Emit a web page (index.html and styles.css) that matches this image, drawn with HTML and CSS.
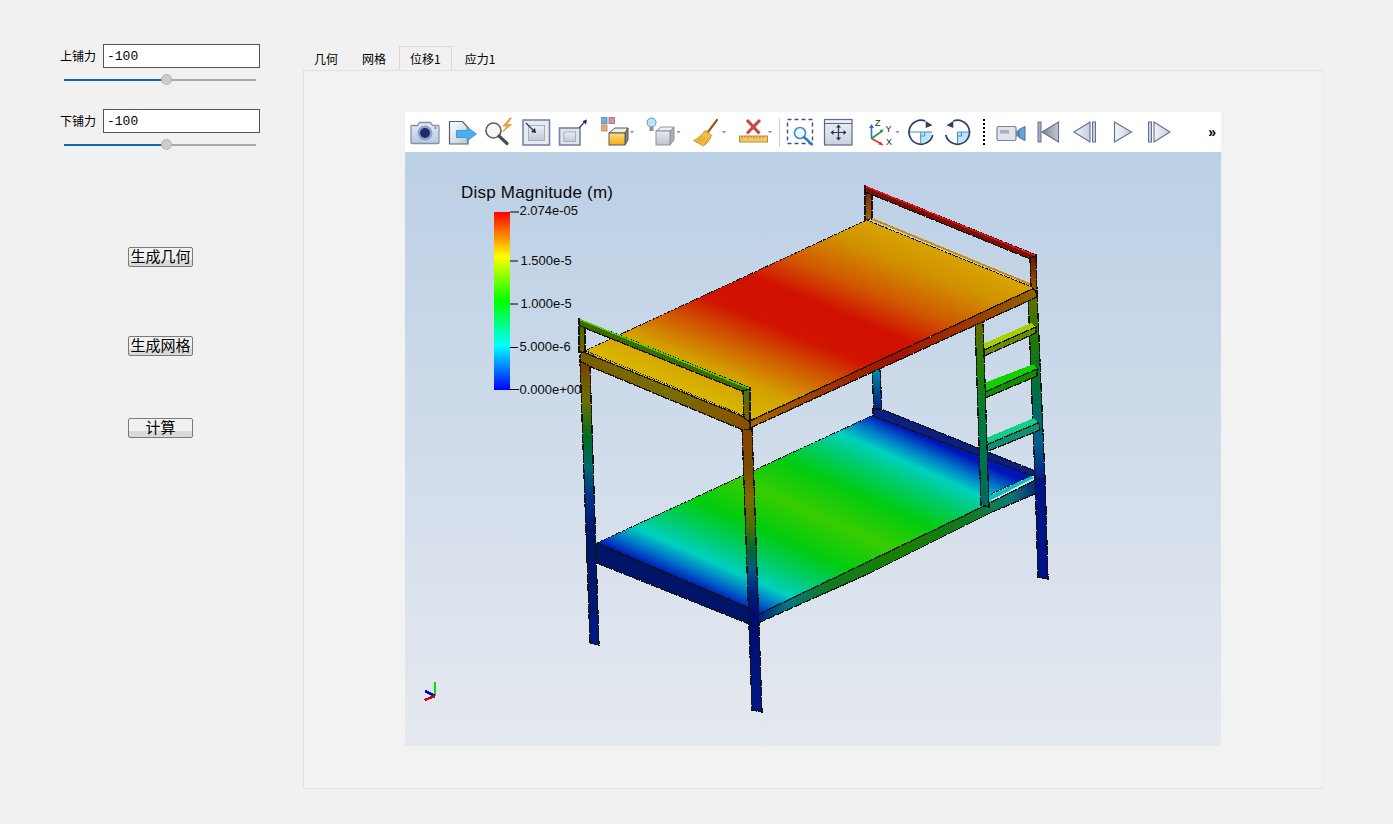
FILE: index.html
```html
<!DOCTYPE html>
<html lang="zh">
<head>
<meta charset="utf-8">
<title>Bed analysis</title>
<link rel="stylesheet" href="styles.css">
</head>
<body>
<div class="app">
  <aside class="side">
    <div class="field"><span class="field-label">上铺力</span><div class="num">-100</div></div>
    <div class="slider"><div class="slider-fill"></div><div class="slider-rest"></div><div class="slider-thumb"></div></div>
    <div class="field field-second"><span class="field-label">下铺力</span><div class="num">-100</div></div>
    <div class="slider"><div class="slider-fill"></div><div class="slider-rest"></div><div class="slider-thumb"></div></div>
    <button class="btn btn-geo">生成几何</button>
    <button class="btn btn-mesh">生成网格</button>
    <button class="btn btn-calc">计算</button>
  </aside>
  <main class="main">
    <nav class="tabs">
      <div class="tab">几何</div>
      <div class="tab">网格</div>
      <div class="tab tab-active">位移1</div>
      <div class="tab">应力1</div>
    </nav>
    <section class="pane">
      <div class="viewer">
        <div class="toolbar">
          <svg width="36" height="40" viewBox="407 112 36 40"><defs><linearGradient id="gc" x1="0" y1="0" x2="0" y2="1"><stop offset="0" stop-color="#e4ebf5"/><stop offset="1" stop-color="#b9c9e0"/></linearGradient></defs>
            <path d="M412 125.500h5.500l2-3h11l2 3h5.500a1 1 0 0 1 1 1v16a1 1 0 0 1-1 1h-26a1 1 0 0 1-1-1v-16a1 1 0 0 1 1-1z" fill="url(#gc)" stroke="#7f93b5" stroke-width="1.300"/><circle cx="425" cy="133" r="7.500" fill="#8fa4cc"/><circle cx="425" cy="133" r="5" fill="#1b2f66"/><circle cx="435.500" cy="128" r=".9" fill="#4e6a9a"/></svg>
          <svg width="37" height="40" viewBox="443 112 37 40"><defs><linearGradient id="gd" x1="0" y1="0" x2="1" y2="1"><stop offset="0" stop-color="#fff"/><stop offset="1" stop-color="#bcc5d4"/></linearGradient></defs>
            <path d="M449.500 121.500h13l5.500 6v16.500h-18.500z" fill="url(#gd)" stroke="#55606e" stroke-width="1.200"/><path d="M456.500 130.500h10.500v-3.500l9.500 7-9.500 7v-3.500h-10.500z" fill="#4aaee8" stroke="#2e8fd0" stroke-width=".8"/></svg>
          <svg width="37" height="40" viewBox="480 112 37 40">
            <circle cx="493.500" cy="130.500" r="7.500" fill="#f4f6f8" stroke="#5c5f63" stroke-width="1.600"/><path d="M499 136l8 7.500" stroke="#4a4c50" stroke-width="3.200" stroke-linecap="round"/><path d="M510 118l-7 8h4l-4.500 6 9-7.500h-4.500l4.500-6.500z" fill="#f2a93b" stroke="#d88a20" stroke-width=".6"/></svg>
          <svg width="37" height="40" viewBox="517 112 37 40"><defs><linearGradient id="gb" x1="0" y1="0" x2="0" y2="1"><stop offset="0" stop-color="#eef0f4"/><stop offset="1" stop-color="#c2c8d2"/></linearGradient></defs>
            <rect x="523" y="120" width="26.500" height="25" fill="#e8ebf0" stroke="#7585a8" stroke-width="1.600"/><rect x="528.500" y="125.500" width="16" height="15" fill="url(#gb)" stroke="#a7b0c0"/><path d="M526 123l8 8" stroke="#2b3c6c" stroke-width="1.200"/><path d="M536 133l-5-1 4-4z" fill="#1d2d5e"/></svg>
          <svg width="38" height="40" viewBox="554 112 38 40">
            <rect x="559.500" y="128" width="20.500" height="17" fill="#dfe3ea" stroke="#7585a8" stroke-width="1.600"/><rect x="564" y="132" width="11.500" height="9.500" fill="url(#gb)" stroke="#a7b0c0"/><path d="M579 128l5.500-6" stroke="#2b3c6c" stroke-width="1.200"/><path d="M587 119.500l-1 5-3.500-3.500z" fill="#1d2d5e"/></svg>
          <svg width="48" height="40" viewBox="592 112 48 40"><defs><linearGradient id="gy" x1="0" y1="0" x2="0" y2="1"><stop offset="0" stop-color="#ffdf80"/><stop offset="1" stop-color="#f6aa10"/></linearGradient></defs>
            <rect x="601.500" y="117.500" width="5.500" height="6" fill="#5db4ea" stroke="#88a"/><rect x="609" y="117.500" width="5.500" height="6" fill="#ee8b84" stroke="#88a"/><rect x="601.500" y="125" width="5.500" height="6" fill="#f2aa55" stroke="#a98"/>
            <path d="M609 133l6-5h13l-3 5z" fill="#f4f0d8" stroke="#4d5870"/><path d="M625 133l3-5v12l-3 5z" fill="#9a8a55" stroke="#4d5870"/><rect x="609" y="133" width="16" height="12" fill="url(#gy)" stroke="#4d5870"/><path d="M630 131h4l-2 2.500z" fill="#8a8f98"/></svg>
          <svg width="48" height="40" viewBox="640 112 48 40"><defs><linearGradient id="gg" x1="0" y1="0" x2="0" y2="1"><stop offset="0" stop-color="#e8ebee"/><stop offset="1" stop-color="#bfc4cc"/></linearGradient></defs>
            <circle cx="651.500" cy="122.500" r="4.500" fill="#bde3f8" stroke="#5a93c8"/><rect x="649.500" y="127" width="4" height="4" fill="#8b929e"/>
            <path d="M656 131l5-4h13l-4 4z" fill="#eef0f3" stroke="#8b929e"/><path d="M670 131l4-4v13l-4 5z" fill="#aab0ba" stroke="#8b929e"/><rect x="656" y="131" width="14" height="14" fill="url(#gg)" stroke="#8b929e"/><path d="M676.500 131h4l-2 2.500z" fill="#8a8f98"/></svg>
          <svg width="47" height="40" viewBox="688 112 47 40">
            <path d="M717 120l-9 12" stroke="#9a5a26" stroke-width="2.200" stroke-linecap="round"/><path d="M705 130.500l6.500 4.500c-1 4-3.500 8-8 11l-10-5.500c5-2.500 9-6 11.500-10z" fill="#f3bd44" stroke="#c98a20" stroke-width=".8"/><path d="M700 144l5-7M697 142.500l5-6M704 145l4-7" stroke="#c98a20" stroke-width=".7"/><path d="M722 131h4l-2 2.500z" fill="#8a8f98"/></svg>
          <svg width="43" height="40" viewBox="735 112 43 40">
            <path d="M747 120l12.500 13.500M760 120l-13 13.500" stroke="#c94a44" stroke-width="3.200"/><rect x="739.500" y="136" width="28" height="6" fill="#f6c864" stroke="#b89132"/><path d="M742 136v3M745 136v2M748 136v3M751 136v2M754 136v3M757 136v2M760 136v3M763 136v2" stroke="#a67f2a" stroke-width=".7"/><path d="M768 131h4l-2 2.500z" fill="#8a8f98"/></svg>
          <div class="sep"></div>
          <svg width="38" height="40" viewBox="781 112 38 40">
            <rect x="787.500" y="119.500" width="25" height="24" fill="none" stroke="#3c5080" stroke-width="1.400" stroke-dasharray="4 3"/><circle cx="800" cy="133" r="5.500" fill="#eef5fb" stroke="#3d8fd0" stroke-width="1.600"/><path d="M804 137l8 7.500" stroke="#2f7cba" stroke-width="2.400" stroke-linecap="round"/></svg>
          <svg width="39" height="40" viewBox="819 112 39 40"><defs><linearGradient id="gp" x1="0" y1="0" x2="0" y2="1"><stop offset="0" stop-color="#eef0f4"/><stop offset="1" stop-color="#ccd2dc"/></linearGradient></defs>
            <rect x="824.500" y="119.500" width="27.500" height="25.500" fill="url(#gp)" stroke="#556a95" stroke-width="1.200"/><path d="M825 123.500h27" stroke="#556a95"/><path d="M838.500 126v13M832 132.500h13" stroke="#2c3e68" stroke-width="1.200"/><path d="M838.500 124.500l-2.500 3h5zM838.500 140.500l-2.500-3h5zM830.500 132.500l3-2.500v5zM846.500 132.500l-3-2.500v5z" fill="#1e2e58"/></svg>
          <svg width="46" height="40" viewBox="858 112 46 40">
            <path d="M871.500 138.500v-12" stroke="#2e6fd0" stroke-width="1.600"/><path d="M871.500 124l-2.500 4h5z" fill="#2e6fd0"/><path d="M871.500 138.500l10-7" stroke="#1f9a4a" stroke-width="1.600"/><path d="M884 129.500l-4.500.5 2 3z" fill="#1f9a4a"/><path d="M871.500 138.500l10 5.500" stroke="#e03030" stroke-width="1.600"/><path d="M884 145.500l-4-4-1.500 3z" fill="#e03030"/>
            <text class="ax" x="875" y="126">Z</text><text class="ax" x="885.500" y="132">Y</text><text class="ax" x="886" y="145">X</text><path d="M895.500 131h4l-2 2.500z" fill="#8a8f98"/></svg>
          <svg width="36" height="40" viewBox="904 112 36 40">
            <path d="M920.700 132h10.800a11 11 0 0 1-10.800 11z" fill="#bfe3f8"/><path d="M909 132h23M920.700 132v11.500M920.700 136h4v-4" fill="none" stroke="#3f8fcf"/><path d="M932.700 135a12 12 0 1 1-7.500-14" fill="none" stroke="#2c4068" stroke-width="1.700"/><path d="M925.700 121l6.800 4.300-6.800 2.700z" fill="#2c4068"/></svg>
          <svg width="37" height="40" viewBox="940 112 37 40">
            <path d="M957.500 132h10.800a11 11 0 0 1-10.800 11z" fill="#bfe3f8"/><path d="M957.500 132h12M957.500 132v11.500M957.500 136h4v-4" fill="none" stroke="#3f8fcf"/><path d="M945.800 135a12 12 0 1 0 7.500-14" fill="none" stroke="#2c4068" stroke-width="1.700"/><path d="M953.300 121l-6.800 4.300 6.800 2.700z" fill="#2c4068"/></svg>
          <div class="dots"></div>
          <svg width="39" height="40" viewBox="991 112 39 40">
            <rect x="997" y="126.500" width="19" height="14" rx="1.500" fill="#dfe3ea" stroke="#7486a8" stroke-width="1.200"/><rect x="1000" y="130" width="9" height="3.500" fill="#a9afba"/><path d="M1016 131l3-1v7l-3-1z" fill="#7486a8"/><path d="M1019 129.500l6-3v14l-6-3z" fill="#5ca9df" stroke="#4f6a94"/></svg>
          <svg width="37" height="40" viewBox="1030 112 37 40"><defs><linearGradient id="gs" x1="0" y1="0" x2="1" y2="0"><stop offset="0" stop-color="#7e8492"/><stop offset="1" stop-color="#c4c8d0"/></linearGradient></defs>
            <rect x="1038" y="122" width="3" height="20" fill="#a7aebc" stroke="#5f7099"/><path d="M1058.500 122v20l-16.500-10z" fill="url(#gs)" stroke="#5f7099" stroke-width="1.100"/></svg>
          <svg width="38" height="40" viewBox="1067 112 38 40"><defs><linearGradient id="gl" x1="0" y1="0" x2="1" y2="0"><stop offset="0" stop-color="#f2f4f7"/><stop offset="1" stop-color="#c8ced9"/></linearGradient></defs>
            <path d="M1090 122v20l-16-10z" fill="url(#gl)" stroke="#5f7099" stroke-width="1.100"/><rect x="1092.500" y="122" width="3" height="20" fill="#c8ced9" stroke="#5f7099"/></svg>
          <svg width="36" height="40" viewBox="1105 112 36 40">
            <path d="M1114.500 122v20l17-10z" fill="url(#gl)" stroke="#5f7099" stroke-width="1.100"/></svg>
          <svg width="37" height="40" viewBox="1141 112 37 40">
            <rect x="1148.500" y="122" width="3" height="20" fill="#c8ced9" stroke="#5f7099"/><path d="M1154 122v20l16-10z" fill="url(#gl)" stroke="#5f7099" stroke-width="1.100"/></svg>
          <span class="more">»</span>
        </div>
        <div class="scene">
          <svg class="scene-svg" width="816" height="594" viewBox="405 152 816 594">
            <defs>
              <linearGradient id="cbar" x1="0" y1="1" x2="0" y2="0"><stop offset="0" stop-color="#0000ff"/><stop offset=".25" stop-color="#00ffff"/><stop offset=".5" stop-color="#00ff00"/><stop offset=".75" stop-color="#ffff00"/><stop offset="1" stop-color="#ff0000"/></linearGradient>
              <linearGradient id="mUp" gradientUnits="userSpaceOnUse" x1="583" y1="352" x2="671" y2="139"><stop offset="0" stop-color="#d8b800"/><stop offset=".15" stop-color="#d4a000"/><stop offset=".28" stop-color="#d06000"/><stop offset=".42" stop-color="#d01400"/><stop offset=".58" stop-color="#d01000"/><stop offset=".72" stop-color="#d05800"/><stop offset=".88" stop-color="#d09000"/><stop offset="1" stop-color="#d8a400"/></linearGradient>
              <linearGradient id="mLo" gradientUnits="userSpaceOnUse" x1="597" y1="543" x2="691" y2="333"><stop offset="0" stop-color="#0014b8"/><stop offset=".06" stop-color="#0070c8"/><stop offset=".13" stop-color="#00d0c0"/><stop offset=".22" stop-color="#00cc70"/><stop offset=".34" stop-color="#00cc10"/><stop offset=".5" stop-color="#38cc00"/><stop offset=".66" stop-color="#00cc10"/><stop offset=".78" stop-color="#00cc70"/><stop offset=".87" stop-color="#00d0c0"/><stop offset=".94" stop-color="#0070c8"/><stop offset="1" stop-color="#0014b8"/></linearGradient>
              <linearGradient id="legL" gradientUnits="userSpaceOnUse" x1="0" y1="362" x2="0" y2="645"><stop offset="0" stop-color="#7a4000"/><stop offset=".14" stop-color="#6a7000"/><stop offset=".27" stop-color="#006a20"/><stop offset=".37" stop-color="#006a70"/><stop offset=".47" stop-color="#00358a"/><stop offset=".6" stop-color="#00146a"/><stop offset=".8" stop-color="#00186c"/><stop offset="1" stop-color="#001a88"/></linearGradient>
              <linearGradient id="legF" gradientUnits="userSpaceOnUse" x1="0" y1="427" x2="0" y2="712"><stop offset="0" stop-color="#8a4500"/><stop offset=".14" stop-color="#7a4a00"/><stop offset=".25" stop-color="#806a00"/><stop offset=".34" stop-color="#507000"/><stop offset=".43" stop-color="#006a30"/><stop offset=".5" stop-color="#005a80"/><stop offset=".58" stop-color="#001f80"/><stop offset=".66" stop-color="#000a70"/><stop offset="1" stop-color="#001a88"/></linearGradient>
              <linearGradient id="legR" gradientUnits="userSpaceOnUse" x1="0" y1="292" x2="0" y2="579"><stop offset="0" stop-color="#6a7000"/><stop offset=".16" stop-color="#207a00"/><stop offset=".34" stop-color="#007040"/><stop offset=".52" stop-color="#00608a"/><stop offset=".65" stop-color="#00208a"/><stop offset="1" stop-color="#001488"/></linearGradient>
              <linearGradient id="legM" gradientUnits="userSpaceOnUse" x1="0" y1="322" x2="0" y2="507"><stop offset="0" stop-color="#6a6a00"/><stop offset=".26" stop-color="#208000"/><stop offset=".55" stop-color="#007a40"/><stop offset="1" stop-color="#006a60"/></linearGradient>
              <linearGradient id="legB" gradientUnits="userSpaceOnUse" x1="0" y1="368" x2="0" y2="414"><stop offset="0" stop-color="#0090a8"/><stop offset=".6" stop-color="#00408a"/><stop offset="1" stop-color="#001a80"/></linearGradient>
              <linearGradient id="upR" gradientUnits="userSpaceOnUse" x1="750" y1="0" x2="1036" y2="0"><stop offset="0" stop-color="#a86800"/><stop offset=".2" stop-color="#a04000"/><stop offset=".5" stop-color="#a01000"/><stop offset=".72" stop-color="#a03000"/><stop offset="1" stop-color="#8f6400"/></linearGradient>
              <linearGradient id="upF" gradientUnits="userSpaceOnUse" x1="580" y1="0" x2="750" y2="0"><stop offset="0" stop-color="#7a5c00"/><stop offset=".5" stop-color="#787000"/><stop offset="1" stop-color="#8a5000"/></linearGradient>
              <linearGradient id="loR" gradientUnits="userSpaceOnUse" x1="757" y1="0" x2="1044" y2="0"><stop offset="0" stop-color="#001a80"/><stop offset=".11" stop-color="#007a80"/><stop offset=".25" stop-color="#107a20"/><stop offset=".5" stop-color="#1a8000"/><stop offset=".73" stop-color="#107a20"/><stop offset=".88" stop-color="#107a70"/><stop offset="1" stop-color="#001080"/></linearGradient>
              <linearGradient id="post1" gradientUnits="userSpaceOnUse" x1="0" y1="186" x2="0" y2="220"><stop offset="0" stop-color="#7a1800"/><stop offset="1" stop-color="#9a6a00"/></linearGradient>
              <linearGradient id="post2" gradientUnits="userSpaceOnUse" x1="0" y1="255" x2="0" y2="292"><stop offset="0" stop-color="#701000"/><stop offset="1" stop-color="#9a6000"/></linearGradient>
              <linearGradient id="post3" gradientUnits="userSpaceOnUse" x1="0" y1="319" x2="0" y2="352"><stop offset="0" stop-color="#3a6a00"/><stop offset="1" stop-color="#7a6000"/></linearGradient>
              <linearGradient id="post4" gradientUnits="userSpaceOnUse" x1="0" y1="388" x2="0" y2="425"><stop offset="0" stop-color="#4a7400"/><stop offset="1" stop-color="#8a5c00"/></linearGradient>
            </defs>

            <text class="cb-title" x="461" y="198" textLength="152">Disp Magnitude (m)</text>
            <rect x="494" y="212" width="16" height="178" fill="url(#cbar)"/>
            <path class="tick" d="M510 212h9M510 261h8M510 304h8M510 347.500h8M510 389.500h9"/>
            <text class="cb-label" x="519.500" y="214.500">2.074e-05</text>
            <text class="cb-label" x="520.500" y="265">1.500e-5</text>
            <text class="cb-label" x="520.500" y="308">1.000e-5</text>
            <text class="cb-label" x="519.500" y="351">5.000e-6</text>
            <text class="cb-label" x="519.500" y="394">0.000e+00</text>

            <g class="bed">
              <polygon class="o" points="872,368 880,368 882,412 874,414" fill="url(#legB)"/>
              <polygon class="ln" points="873.500,415 1033,475 991,494 991,503 757,615 597,543" fill="url(#mLo)"/>
              <polygon class="o" points="873,409 881,409 1040,473 1033,476 873,416" fill="#0a1f80"/>
              <polygon class="o" points="587,543 597,543 747,607 757,615 758,623 749,624 597,563 587,557" fill="#00146a"/>
              <polygon class="o" points="757,615 980,508 1033,481 1044,476 1044,490 990,513 870,573 758,623" fill="url(#loR)"/>
              <polygon points="991,495 1031,476 1034,478 991,500" fill="#10c0c0"/>
              <path class="dot" d="M597 544L746 607"/>

              <polygon class="o" points="580,361 590,366 599,645 590,643" fill="url(#legL)"/>
              <polygon class="o" points="1035,476 1045,476 1048,579 1038,577" fill="#001488"/>
              <polygon class="o" points="1028,292 1037,292 1045,478 1035,480" fill="url(#legR)"/>

              <polygon points="983,344 1031,323 1036,327 984,350" fill="#a4d000"/>
              <polygon class="o" points="984,350 1036,327 1036,333 984,356" fill="#6a8a00"/>
              <polygon points="984,383 1034,364 1037,369 985,392" fill="#10d000"/>
              <polygon class="o" points="985,392 1037,369 1037,376 985,398" fill="#109000"/>
              <polygon points="986,438 1034,418 1038,423 986,445" fill="#10d088"/>
              <polygon class="o" points="986,445 1038,423 1040,430 986,452" fill="#109070"/>

              <polygon class="o" points="975,322 983,322 989,507 981,505" fill="url(#legM)"/>
              <polygon class="o" points="742,427 752,427 762,712 752,710" fill="url(#legF)"/>

              <polygon class="ln" points="866.700,220 1034.300,288 750,420.700 583,351.700" fill="url(#mUp)"/>
              <polygon class="o" points="750,421 1034.300,288 1037,297 750,428" fill="url(#upR)"/>
              <polygon class="o" points="580,355 583,352 744,417 750,421 750,429 743,430 589,366 580,361" fill="url(#upF)"/>
              <path class="dot" d="M586 351L745 416"/>

              <polygon class="o" points="865,186 872,189 872,219 865,220" fill="url(#post1)"/>
              <path class="rail" d="M872 219L1032 285"/>
              <polygon class="o" points="865,186 1036,255 1036,261 1030,259 868,193 865,193" fill="#7a1000"/>
              <path class="edge-red" d="M866 186.500L1035 255.500"/>
              <polygon class="o" points="1030,258 1036,256 1037,292 1031,287" fill="url(#post2)"/>

              <polygon class="o" points="579,319 585,322 585,352 579,352" fill="url(#post3)"/>
              <polygon class="o" points="579,319 750,388 749,394 585,328 579,325" fill="#3e6a00"/>
              <path class="edge-green" d="M580 319.500L749 388.500"/>
              <polygon class="o" points="743,391 750,389 750,422 744,418" fill="url(#post4)"/>
            </g>

            <g class="triad">
              <path class="tri-g" d="M435 696V682"/>
              <path class="tri-b" d="M435 696L425 691"/>
              <path class="tri-r" d="M435 696L424.500 700"/>
            </g>
          </svg>
        </div>
      </div>
    </section>
  </main>
</div>
</body>
</html>
```

FILE: styles.css
```css
* { box-sizing: border-box; }
html, body { margin: 0; padding: 0; }
body {
  width: 1393px;
  height: 824px;
  overflow: hidden;
  background: #f1f1f1;
  color: #000;
  font-family: "Noto Sans CJK SC", "Liberation Sans", sans-serif;
}
.app { display: flex; }

.side {
  width: 303px;
  padding-top: 44px;
  display: flex;
  flex-direction: column;
  align-items: flex-start;
}
.field { display: flex; align-items: center; padding-left: 60px; gap: 7px; }
.field-second { margin-top: 23px; }
.field-label { width: 36px; font-size: 12px; line-height: 16px; white-space: nowrap; }
.num {
  width: 157px;
  height: 24px;
  background: #fff;
  border: 1px solid #555;
  padding-left: 3px;
  font-family: "Liberation Mono", monospace;
  font-size: 13px;
  line-height: 24px;
  font-weight: 400;
}
.slider { position: relative; display: flex; align-items: center; width: 192px; height: 12px; margin: 6px 0 0 64px; }
.slider-fill { width: 102px; height: 2px; background: #0a68b8; }
.slider-rest { flex: 1; height: 2px; background: #a8a8a8; }
.slider-thumb {
  position: absolute;
  left: 97px;
  top: 0;
  width: 11px;
  height: 11px;
  border-radius: 50%;
  background: #cdcdcd;
  border: 1px solid #b2b2b2;
}
.btn {
  display: block;
  width: 65px;
  height: 20px;
  margin-left: 128px;
  padding: 0 0 2px;
  border: 1px solid #7a7a7a;
  border-radius: 2px;
  background: linear-gradient(#f1f1f1 0, #f1f1f1 68%, #d9d9d9 68%, #d9d9d9 100%);
  font-family: "Noto Sans CJK SC", sans-serif;
  font-size: 15px;
  line-height: 16px;
  color: #000;
}
.btn-geo { margin-top: 96px; }
.btn-mesh { margin-top: 69px; }
.btn-calc { margin-top: 62px; }

.main { width: 1021px; padding-top: 46px; }
.tabs { display: flex; height: 24px; }
.tab {
  height: 24px;
  padding: 0 12px 0 10px;
  font-size: 12px;
  line-height: 24px;
  white-space: nowrap;
  border: 1px solid transparent;
  border-bottom: 0;
}
.tab-active { border-color: #d9d9d9; padding: 0 10px; background: #f1f1f1; }
.tab-active + .tab { padding-left: 12px; }
.pane {
  width: 1021px;
  height: 719px;
  padding: 41px 0 0 101px;
  border: 1px solid #e2e2e2;
  border-right-color: #eeeeee;
  background: #f2f2f2;
}
.viewer { width: 816px; height: 634px; display: flex; flex-direction: column; }
.toolbar { height: 40px; display: flex; align-items: center; padding-left: 2px; background: #fff; }
.toolbar svg { display: block; flex: none; }
.ax { font-family: "Liberation Sans", sans-serif; font-size: 9px; fill: #222; }
.sep { flex: none; width: 3px; height: 29px; border-left: 1px solid #ccc; margin-left: 1px; margin-right: -1px; }
.dots { flex: none; width: 14px; height: 26px; background-image: linear-gradient(#000 0, #000 50%, transparent 50%); background-size: 2px 4px; background-position: 6px 0; background-repeat: repeat-y; }
.more { margin-left: auto; padding-right: 5px; font-family: "Liberation Sans", sans-serif; font-size: 14px; font-weight: 700; line-height: 40px; }

.scene { height: 594px; background: linear-gradient(#bbcfe5, #e5e9ef); }
.scene-svg { display: block; }
.cb-title { font-family: "Liberation Sans", sans-serif; font-size: 17px; fill: #0a0a0a; }
.cb-label { font-family: "Liberation Sans", sans-serif; font-size: 13px; fill: #0a0a0a; }
.tick { stroke: #000; stroke-width: 1; fill: none; }

.bed polygon, .bed path { shape-rendering: crispEdges; }
.o { stroke: #141414; stroke-width: 1.300; stroke-dasharray: 9 1; }
.ln { stroke: #111; stroke-width: 1; stroke-dasharray: 3 1; }
.dot { stroke: #111; stroke-width: 1; stroke-dasharray: 1 1; fill: none; }
.rail { stroke: #d08a00; stroke-width: 2; fill: none; }
.edge-red { stroke: #e81010; stroke-width: 1.500; fill: none; }
.edge-green { stroke: #50d000; stroke-width: 1.500; fill: none; }
.triad path { shape-rendering: crispEdges; fill: none; }
.tri-g { stroke: #00e000; stroke-width: 2.500; }
.tri-b { stroke: #0000e0; stroke-width: 2.500; }
.tri-r { stroke: #e00000; stroke-width: 2.500; }
```
